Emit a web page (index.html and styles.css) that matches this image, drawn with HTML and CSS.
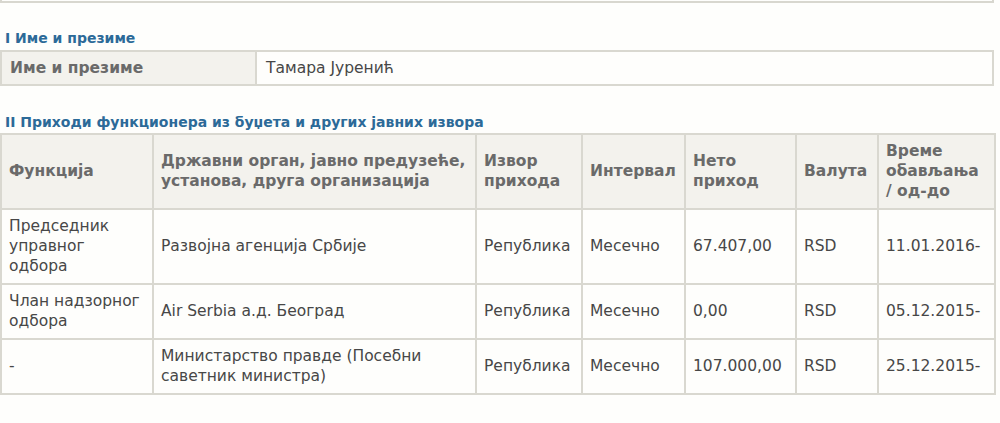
FILE: index.html
```html
<!DOCTYPE html>
<html lang="sr">
<head>
<meta charset="utf-8">
<title>Имовинска карта</title>
<link rel="stylesheet" href="styles.css">
</head>
<body>
<div class="page">
  <div class="top-box"></div>

  <h2 class="section-title">I Име и презиме</h2>
  <table class="grid name-table">
    <colgroup><col class="c-label"><col></colgroup>
    <tr>
      <th>Име и презиме</th>
      <td>Тамара Јуренић</td>
    </tr>
  </table>

  <h2 class="section-title second">II Приходи функционера из буџета и других јавних извора</h2>
  <table class="grid income-table">
    <colgroup>
      <col class="w1"><col class="w2"><col class="w3"><col class="w4"><col class="w5"><col class="w6"><col class="w7">
    </colgroup>
    <tr>
      <th>Функција</th>
      <th>Државни орган, јавно предузеће, установа, друга организација</th>
      <th>Извор прихода</th>
      <th>Интервал</th>
      <th>Нето приход</th>
      <th>Валута</th>
      <th>Време обављања / од-до</th>
    </tr>
    <tr>
      <td>Председник управног одбора</td>
      <td>Развојна агенција Србије</td>
      <td>Република</td>
      <td>Месечно</td>
      <td>67.407,00</td>
      <td>RSD</td>
      <td>11.01.2016-</td>
    </tr>
    <tr>
      <td>Члан надзорног одбора</td>
      <td>Air Serbia а.д. Београд</td>
      <td>Република</td>
      <td>Месечно</td>
      <td>0,00</td>
      <td>RSD</td>
      <td>05.12.2015-</td>
    </tr>
    <tr>
      <td>-</td>
      <td>Министарство правде (Посебни саветник министра)</td>
      <td>Република</td>
      <td>Месечно</td>
      <td>107.000,00</td>
      <td>RSD</td>
      <td>25.12.2015-</td>
    </tr>
  </table>
</div>
</body>
</html>
```

FILE: styles.css
```css
html, body {
  margin: 0;
  padding: 0;
  background: #fefefc;
}

body {
  font-family: "DejaVu Sans", Verdana, sans-serif;
  font-size: 15.5px;
  color: #474747;
}

.page {
  width: 994px;
}

.top-box {
  height: 1px;
  border: 2px solid #d8d7cf;
  border-top: none;
}

.section-title {
  margin: 27px 0 4px 5px;
  font-size: 14px;
  line-height: 16px;
  font-weight: bold;
  color: #2c6a98;
}

.section-title.second {
  margin-top: 28px;
  margin-bottom: 3px;
}

.grid {
  width: 994px;
  border-collapse: collapse;
  table-layout: fixed;
}

.grid th,
.grid td {
  border: 2px solid #d9d8d0;
  padding: 6px 5px 7px 7px;
  line-height: 20px;
  text-align: left;
  vertical-align: middle;
}

.grid th {
  background: #f3f2ed;
  color: #6a6a6a;
  font-weight: bold;
}

.grid td {
  background: #fefefc;
}

.name-table th,
.name-table td {
  padding-top: 6px;
  padding-bottom: 6px;
}

.name-table .c-label { width: 255px; }
.name-table th { padding-left: 8px; }
.name-table td { padding-left: 9px; }

.income-table .w1 { width: 152px; }
.income-table .w2 { width: 323px; }
.income-table .w3 { width: 106px; }
.income-table .w4 { width: 103px; }
.income-table .w5 { width: 111px; }
.income-table .w6 { width: 82px; }
.income-table .w7 { width: 117px; }
```
